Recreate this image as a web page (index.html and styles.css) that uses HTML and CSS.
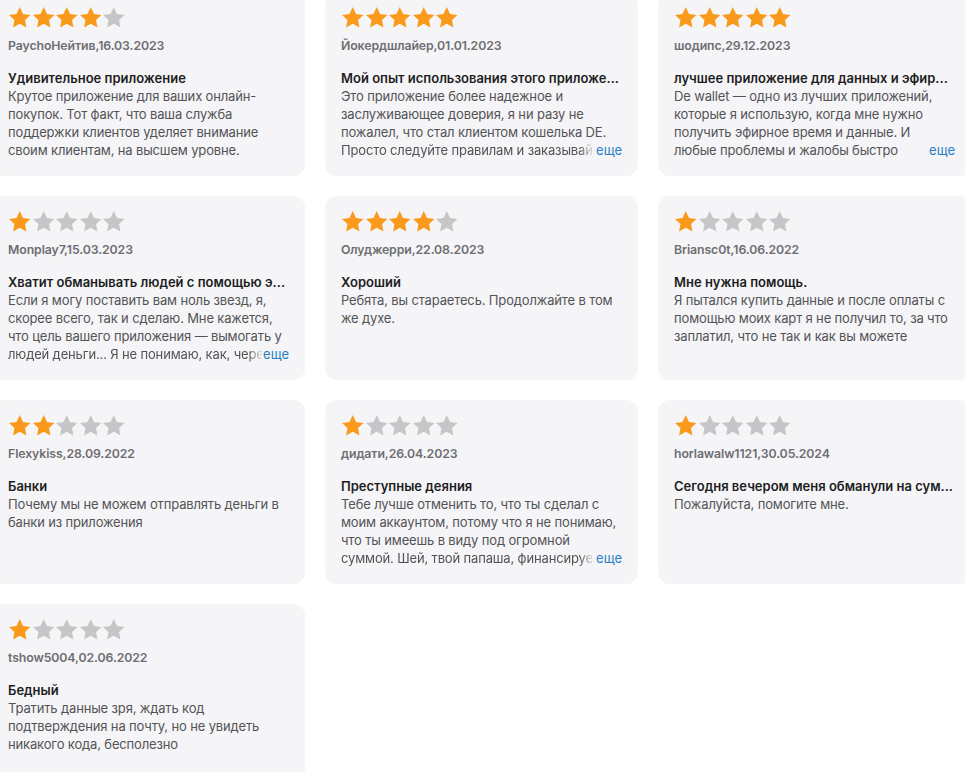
FILE: index.html
```html
<!DOCTYPE html>
<html lang="ru">
<head>
<meta charset="utf-8">
<title>Отзывы</title>
<link rel="stylesheet" href="styles.css">
</head>
<body>
<svg width="0" height="0" class="defs" aria-hidden="true">
  <defs>
    <path id="star" d="M12 0.9l3.35 6.9 7.6 1.05-5.55 5.25 1.4 7.5L12 17.95l-6.8 3.65 1.4-7.5L1.05 8.85l7.6-1.05z"/>
  </defs>
</svg>
<main class="grid">

  <article class="card">
    <div class="stars" data-r="4"></div>
    <div class="author">PaychoНейтив,16.03.2023</div>
    <h3 class="title">Удивительное приложение</h3>
    <p class="body">Крутое приложение для ваших онлайн-<br>покупок. Тот факт, что ваша служба<br>поддержки клиентов уделяет внимание<br>своим клиентам, на высшем уровне.</p>
  </article>

  <article class="card">
    <div class="stars" data-r="5"></div>
    <div class="author">Йокердшлайер,01.01.2023</div>
    <h3 class="title">Мой опыт использования этого приложе...</h3>
    <p class="body">Это приложение более надежное и<br>заслуживающее доверия, я ни разу не<br>пожалел, что стал клиентом кошелька DE.</p>
    <div class="lastline"><span class="rest fade">Просто следуйте правилам и заказывай</span><a class="more" href="#">еще</a></div>
  </article>

  <article class="card">
    <div class="stars" data-r="5"></div>
    <div class="author">шодипс,29.12.2023</div>
    <h3 class="title">лучшее приложение для данных и эфир...</h3>
    <p class="body">De wallet — одно из лучших приложений,<br>которые я использую, когда мне нужно<br>получить эфирное время и данные. И</p>
    <div class="lastline"><span class="rest">любые проблемы и жалобы быстро</span><a class="more" href="#">еще</a></div>
  </article>

  <article class="card">
    <div class="stars" data-r="1"></div>
    <div class="author">Monplay7,15.03.2023</div>
    <h3 class="title">Хватит обманывать людей с помощью э...</h3>
    <p class="body">Если я могу поставить вам ноль звезд, я,<br>скорее всего, так и сделаю. Мне кажется,<br>что цель вашего приложения — вымогать у</p>
    <div class="lastline"><span class="rest fade">людей деньги... Я не понимаю, как, чере</span><a class="more" href="#">еще</a></div>
  </article>

  <article class="card">
    <div class="stars" data-r="4"></div>
    <div class="author">Олуджерри,22.08.2023</div>
    <h3 class="title">Хороший</h3>
    <p class="body">Ребята, вы стараетесь. Продолжайте в том<br>же духе.</p>
  </article>

  <article class="card">
    <div class="stars" data-r="1"></div>
    <div class="author">Briansc0t,16.06.2022</div>
    <h3 class="title">Мне нужна помощь.</h3>
    <p class="body">Я пытался купить данные и после оплаты с<br>помощью моих карт я не получил то, за что<br>заплатил, что не так и как вы можете</p>
  </article>

  <article class="card">
    <div class="stars" data-r="2"></div>
    <div class="author">Flexykiss,28.09.2022</div>
    <h3 class="title">Банки</h3>
    <p class="body">Почему мы не можем отправлять деньги в<br>банки из приложения</p>
  </article>

  <article class="card">
    <div class="stars" data-r="1"></div>
    <div class="author">дидати,26.04.2023</div>
    <h3 class="title">Преступные деяния</h3>
    <p class="body">Тебе лучше отменить то, что ты сделал с<br>моим аккаунтом, потому что я не понимаю,<br>что ты имеешь в виду под огромной</p>
    <div class="lastline"><span class="rest fade">суммой. Шей, твой папаша, финансируе</span><a class="more" href="#">еще</a></div>
  </article>

  <article class="card">
    <div class="stars" data-r="1"></div>
    <div class="author">horlawalw1121,30.05.2024</div>
    <h3 class="title">Сегодня вечером меня обманули на сум...</h3>
    <p class="body">Пожалуйста, помогите мне.</p>
  </article>

  <article class="card">
    <div class="stars" data-r="1"></div>
    <div class="author">tshow5004,02.06.2022</div>
    <h3 class="title">Бедный</h3>
    <p class="body">Тратить данные зря, ждать код<br>подтверждения на почту, но не увидеть<br>никакого кода, бесполезно</p>
  </article>

</main>
<script src="app.js"></script>
</body>
</html>
```

FILE: app.js
```js
document.querySelectorAll('.stars').forEach(function (el) {
  var r = parseInt(el.getAttribute('data-r'), 10);
  var html = '';
  for (var i = 0; i < 5; i++) {
    html += '<svg class="star ' + (i < r ? 'on' : 'off') + '" viewBox="0 0 24 23"><use href="#star"/></svg>';
  }
  el.innerHTML = html;
});
```

FILE: styles.css
```css
html, body {
  margin: 0;
  padding: 0;
  background: #ffffff;
  overflow: hidden;
}

body {
  font-family: Inter, "Noto Sans", "Liberation Sans", sans-serif;
  -webkit-font-smoothing: antialiased;
}

.defs {
  position: absolute;
}

.grid {
  display: grid;
  grid-template-columns: repeat(3, 313px);
  grid-auto-rows: 184px;
  column-gap: 20px;
  row-gap: 20px;
  margin: -8px 0 0 -8px;
  width: 979px;
}

.card {
  background: #f5f5f7;
  border-radius: 12px;
  padding: 14px 16px 0;
  box-sizing: border-box;
  overflow: hidden;
}

.stars {
  display: flex;
  height: 23px;
}

.star {
  width: 23.5px;
  height: 23px;
  flex: none;
}

.star.on { fill: #fa9a1c; }
.star.off { fill: #c6c6c8; }

.author {
  margin-top: 9px;
  font-size: 12.3px;
  line-height: 16px;
  font-weight: 600;
  letter-spacing: -0.1px;
  color: #6e6e73;
  white-space: nowrap;
}

.title {
  margin: 15px 0 0;
  font-size: 13px;
  line-height: 18px;
  font-weight: 600;
  color: #1d1d1f;
  white-space: nowrap;
}

.body {
  margin: 0;
  font-size: 13px;
  line-height: 18px;
  font-weight: 400;
  letter-spacing: -0.15px;
  color: #535356;
  white-space: nowrap;
}

.lastline {
  display: flex;
  align-items: baseline;
  font-size: 13px;
  line-height: 18px;
  letter-spacing: -0.15px;
  color: #535356;
}

.rest {
  flex: 0 1 auto;
  min-width: 0;
  white-space: nowrap;
}

.rest.fade {
  -webkit-mask-image: linear-gradient(to right, #000 calc(100% - 14px), rgba(0, 0, 0, 0.12));
  mask-image: linear-gradient(to right, #000 calc(100% - 14px), rgba(0, 0, 0, 0.12));
}

.more {
  flex: none;
  margin-left: auto;
  padding-left: 1px;
  color: #2a7fc4;
  text-decoration: none;
  letter-spacing: 0;
}
```
